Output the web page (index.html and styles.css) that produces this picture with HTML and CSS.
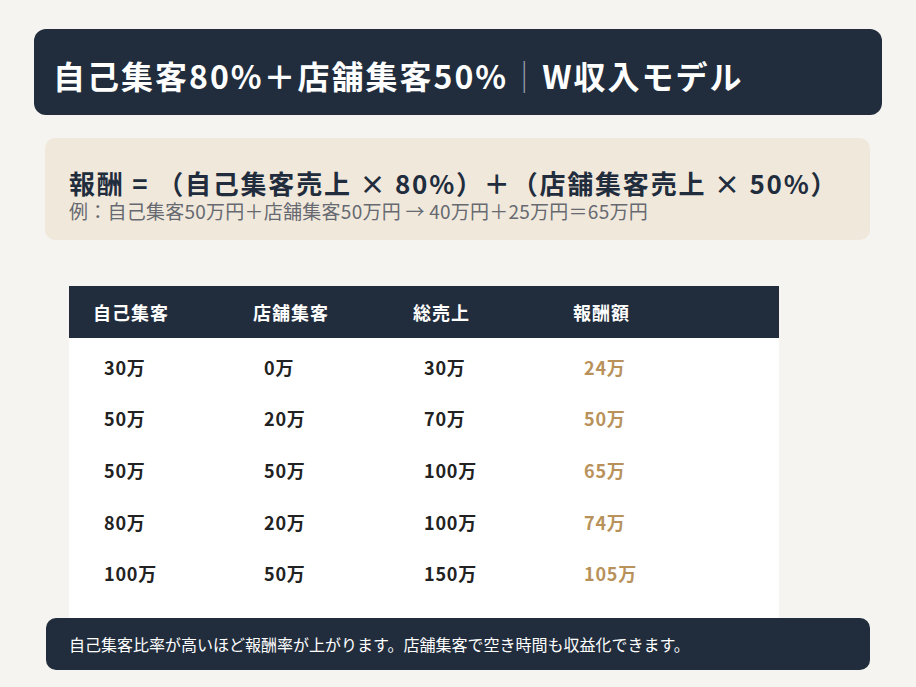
FILE: index.html
```html
<!DOCTYPE html>
<html lang="ja">
<head>
<meta charset="utf-8">
<link rel="stylesheet" href="styles.css">
</head>
<body>
<div class="page">
  <header class="title-bar">
    <h1 class="title">自己集客80%＋店舗集客50%<span class="sep">｜</span>W収入モデル</h1>
  </header>
  <section class="formula">
    <p class="formula-main">報酬 = （自己集客売上 × 80%）＋（店舗集客売上 × 50%）</p>
    <p class="formula-ex">例：自己集客50万円＋店舗集客50万円 → 40万円＋25万円＝65万円</p>
  </section>
  <div class="table-wrap">
    <table class="rates">
      <colgroup><col class="c1"><col class="c2"><col class="c3"><col class="c4"></colgroup>
      <thead>
        <tr><th>自己集客</th><th>店舗集客</th><th>総売上</th><th>報酬額</th></tr>
      </thead>
      <tbody>
        <tr><td>30万</td><td>0万</td><td>30万</td><td class="pay">24万</td></tr>
        <tr><td>50万</td><td>20万</td><td>70万</td><td class="pay">50万</td></tr>
        <tr><td>50万</td><td>50万</td><td>100万</td><td class="pay">65万</td></tr>
        <tr><td>80万</td><td>20万</td><td>100万</td><td class="pay">74万</td></tr>
        <tr><td>100万</td><td>50万</td><td>150万</td><td class="pay">105万</td></tr>
        <tr><td>100万</td><td>100万</td><td>200万</td><td class="pay">130万</td></tr>
      </tbody>
    </table>
  </div>
  <footer class="note">自己集客比率が高いほど報酬率が上がります。店舗集客で空き時間も収益化できます。</footer>
</div>
</body>
</html>
```

FILE: styles.css
```css
* { box-sizing: border-box; }
html, body { margin: 0; padding: 0; }
body {
  background: #f6f4f0;
  font-family: "Noto Sans CJK JP", "Noto Sans", sans-serif;
  color: #212d3d;
}
.page {
  position: relative;
  width: 916px;
  height: 687px;
  overflow: hidden;
  padding-top: 29px;
}
.title-bar {
  margin-left: 34px;
  width: 848px;
  height: 86px;
  background: #212d3d;
  border-radius: 12px;
  display: flex;
  align-items: center;
  padding: 6px 0 0 19px;
}
.title {
  margin: 0;
  color: #fff;
  font-size: 32px;
  font-weight: 700;
  letter-spacing: 2px;
  line-height: 1;
}
.sep { color: #9aa2ad; font-weight: 300; }
.formula {
  margin: 23px 0 0 45px;
  width: 825px;
  height: 102px;
  background: #f1e8dc;
  border-radius: 10px;
  padding: 28px 0 0 24px;
}
.formula p { margin: 0; }
.formula-main {
  font-size: 26px;
  font-weight: 700;
  line-height: 34px;
  letter-spacing: 1.8px;
  color: #212d3d;
}
.formula-ex {
  font-size: 19px;
  line-height: 22px;
  letter-spacing: 0.25px;
  color: #666a70;
}
.table-wrap {
  margin: 46px 0 0 69px;
  width: 710px;
}
.rates {
  width: 710px;
  border-collapse: collapse;
  table-layout: fixed;
  background: #fff;
}
.c1, .c2, .c3 { width: 160px; }
.c4 { width: 230px; }
.rates th {
  background: #212d3d;
  color: #fff;
  height: 52px;
  font-size: 18px;
  font-weight: 700;
  letter-spacing: 1px;
  text-align: left;
  padding: 0 0 0 24px;
}
.rates td {
  height: 51.6px;
  font-size: 18px;
  font-weight: 700;
  letter-spacing: 0.8px;
  color: #222;
  text-align: left;
  padding: 6px 0 0 35px;
}
.rates td.pay { color: #b8925a; }
.note {
  position: absolute;
  left: 46px;
  top: 618px;
  width: 824px;
  height: 52px;
  background: #212d3d;
  border-radius: 10px;
  color: #fff;
  font-size: 16px;
  display: flex;
  align-items: center;
  padding-left: 23px;
}
```
